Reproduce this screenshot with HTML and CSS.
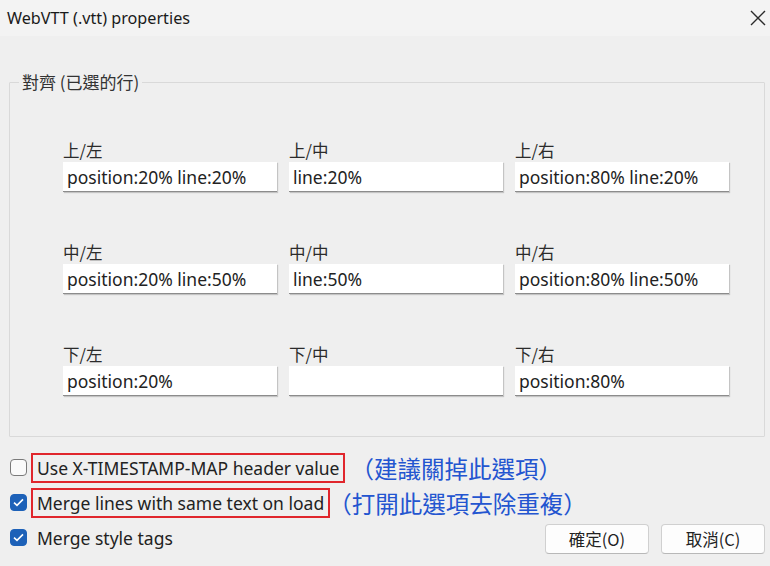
FILE: index.html
```html
<!DOCTYPE html>
<html lang="zh-Hant">
<head>
    <meta charset="UTF-8">
    <title>WebVTT (.vtt) properties</title>
    <link rel="stylesheet" href="styles.css">
</head>
<body>
    <div class="titlebar">
        <span class="title">WebVTT (.vtt) properties</span>
        <svg class="close" width="18" height="18" viewBox="0 0 18 18">
            <path d="M2 2 L16 16 M16 2 L2 16" stroke="#2b2b2b" stroke-width="1.4" fill="none"/>
        </svg>
    </div>

    <div class="dialog">
        <fieldset class="group">
            <legend>對齊 (已選的行)</legend>
            <div class="grid">
                <div class="cell"><label>上/左</label><input type="text" value="position:20% line:20%"></div>
                <div class="cell"><label>上/中</label><input type="text" value="line:20%"></div>
                <div class="cell"><label>上/右</label><input type="text" value="position:80% line:20%"></div>

                <div class="cell"><label>中/左</label><input type="text" value="position:20% line:50%"></div>
                <div class="cell"><label>中/中</label><input type="text" value="line:50%"></div>
                <div class="cell"><label>中/右</label><input type="text" value="position:80% line:50%"></div>

                <div class="cell"><label>下/左</label><input type="text" value="position:20%"></div>
                <div class="cell"><label>下/中</label><input type="text" value=""></div>
                <div class="cell"><label>下/右</label><input type="text" value="position:80%"></div>
            </div>
        </fieldset>

        <div class="options">
            <div class="option">
                <span class="check"></span>
                <span class="opt-text marked">Use X-TIMESTAMP-MAP header value</span>
                <span class="note first">（建議關掉此選項）</span>
            </div>
            <div class="option">
                <span class="check on"><svg width="11" height="9" viewBox="0 0 11 9"><path d="M1 4.6 L4 7.4 L10 1.4" stroke="#fff" stroke-width="1.6" fill="none"/></svg></span>
                <span class="opt-text marked">Merge lines with same text on load</span>
                <span class="note">（打開此選項去除重複）</span>
            </div>
            <div class="footer">
                <div class="option">
                    <span class="check on"><svg width="11" height="9" viewBox="0 0 11 9"><path d="M1 4.6 L4 7.4 L10 1.4" stroke="#fff" stroke-width="1.6" fill="none"/></svg></span>
                    <span class="opt-text">Merge style tags</span>
                </div>
                <div class="buttons">
                    <button class="btn">確定(O)</button>
                    <button class="btn">取消(C)</button>
                </div>
            </div>
        </div>
    </div>
</body>
</html>
```

FILE: styles.css
```css
body {
    margin: 0;
    width: 770px;
    height: 566px;
    overflow: hidden;
    background-color: #efefef;
    color: #1c1c1c;
    font-family: "Noto Sans", "Noto Sans CJK TC", sans-serif;
    font-size: 15px;
}

.titlebar {
    height: 36px;
    background-color: #f3f3f3;
    display: flex;
    align-items: center;
    justify-content: space-between;
    padding: 0 3px 0 7px;
}

.title {
    font-size: 16.2px;
    color: #1a1a1a;
}

.close {
    margin-top: -1px;
}

.dialog {
    padding: 0 5px 0 9px;
}

.group {
    margin: 35px 0 0 0;
    padding: 0;
    border: 1px solid #d9d9d9;
    border-radius: 1px;
}

.group legend {
    margin-left: 9px;
    padding: 0 3px;
    font-family: "Noto Sans CJK TC", sans-serif;
    font-size: 17px;
    line-height: 22px;
    color: #333;
}

.grid {
    display: grid;
    grid-template-columns: repeat(3, 214px);
    column-gap: 12px;
    row-gap: 50px;
    padding: 47px 0 40px 53px;
}

.cell label {
    display: block;
    height: 20px;
    line-height: 20px;
    margin-bottom: 2px;
    font-family: "Noto Sans CJK TC", sans-serif;
    font-size: 16.5px;
    color: #2b2b2b;
}

.cell input {
    display: block;
    box-sizing: border-box;
    width: 214px;
    height: 30px;
    margin: 0;
    padding: 0 4px;
    border: none;
    border-bottom: 1px solid #8c8c8c;
    box-shadow: 1px 1px 1px rgba(0, 0, 0, 0.18);
    background-color: #fff;
    font-family: "Noto Sans", sans-serif;
    font-size: 17.5px;
    color: #222;
    outline: none;
}

.options {
    padding: 13px 0 0 1px;
}

.option {
    display: flex;
    align-items: center;
    height: 35px;
}

.check {
    box-sizing: border-box;
    width: 17px;
    height: 17px;
    border: 1px solid #7a7a7a;
    border-radius: 4px;
    background-color: #fafafa;
    margin-right: 4px;
    display: flex;
    align-items: center;
    justify-content: center;
}

.check.on {
    background-color: #1d61b8;
    border-color: #1d61b8;
}

.opt-text {
    box-sizing: border-box;
    height: 30px;
    line-height: 26px;
    padding: 0 4px;
    border: 2px solid transparent;
    font-size: 17.5px;
    color: #222;
}

.opt-text.marked {
    border-color: #e0262c;
}

.note {
    font-family: "Noto Sans CJK TC", sans-serif;
    font-size: 23.5px;
    line-height: 30px;
    color: #2355d0;
    margin-left: -2px;
}

.note.first {
    margin-left: 5px;
}

.footer {
    display: flex;
    justify-content: space-between;
    align-items: flex-start;
}

.buttons {
    display: flex;
    gap: 12px;
    margin-top: 4px;
}

.btn {
    width: 104px;
    height: 30px;
    background-color: #fdfdfd;
    border: 1px solid #d0d0d0;
    border-bottom-color: #b8b8b8;
    border-radius: 4px;
    font-family: "Noto Sans CJK TC", sans-serif;
    font-size: 16.5px;
    color: #222;
}
```
